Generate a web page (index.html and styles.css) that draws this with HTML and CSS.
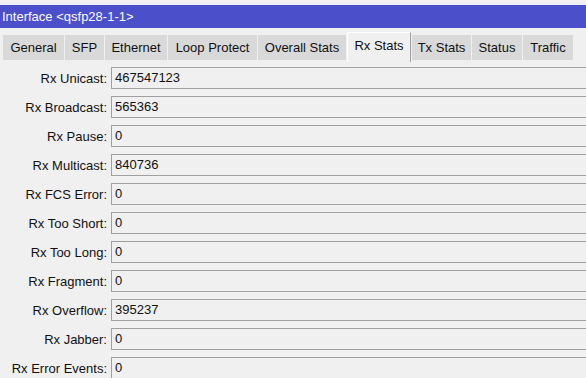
FILE: index.html
```html
<!DOCTYPE html>
<html>

<link rel="stylesheet" href="styles.css">

<head>
    <meta charset="utf-8">
    <title>Interface &lt;qsfp28-1-1&gt;</title>
</head>

<body>
    <main class="Window">
        <div class="TitleBar">Interface &lt;qsfp28-1-1&gt;</div>

        <nav class="Tabs">
            <div class="Tab">General</div>
            <div class="Tab">SFP</div>
            <div class="Tab">Ethernet</div>
            <div class="Tab">Loop Protect</div>
            <div class="Tab">Overall Stats</div>
            <div class="Tab Active">Rx Stats</div>
            <div class="Tab">Tx Stats</div>
            <div class="Tab">Status</div>
            <div class="Tab">Traffic</div>
        </nav>

        <section class="Stats">
            <div class="Row"><label>Rx Unicast:</label><div class="Field">467547123</div></div>
            <div class="Row"><label>Rx Broadcast:</label><div class="Field">565363</div></div>
            <div class="Row"><label>Rx Pause:</label><div class="Field">0</div></div>
            <div class="Row"><label>Rx Multicast:</label><div class="Field">840736</div></div>
            <div class="Row"><label>Rx FCS Error:</label><div class="Field">0</div></div>
            <div class="Row"><label>Rx Too Short:</label><div class="Field">0</div></div>
            <div class="Row"><label>Rx Too Long:</label><div class="Field">0</div></div>
            <div class="Row"><label>Rx Fragment:</label><div class="Field">0</div></div>
            <div class="Row"><label>Rx Overflow:</label><div class="Field">395237</div></div>
            <div class="Row"><label>Rx Jabber:</label><div class="Field">0</div></div>
            <div class="Row"><label>Rx Error Events:</label><div class="Field">0</div></div>
        </section>
    </main>
</body>

</html>
```

FILE: styles.css
```css
* {
    box-sizing: border-box;
    padding: 0;
    margin: 0;
}

body {
    background-color: #f0f0f0;
    font-family: 'Liberation Sans', Arial, sans-serif;
    font-size: 13px;
    color: #111111;
    overflow: hidden;
    height: 378px;
}

.Window {
    padding-top: 5px;
}

.TitleBar {
    height: 23px;
    line-height: 23px;
    padding-left: 2px;
    background-color: #4b4fc9;
    color: #ffffff;
}

.Tabs {
    display: flex;
    align-items: flex-end;
    gap: 1px;
    padding-left: 3px;
    margin-top: 2px;
    height: 30px;

    & .Tab {
        height: 25px;
        line-height: 25px;
        text-align: center;
        background-color: #d9d9d9;
        white-space: nowrap;
    }

    /* fixed widths so the strip lines up like the native dialog */
    & .Tab:nth-child(1) { width: 61px; }
    & .Tab:nth-child(2) { width: 39px; }
    & .Tab:nth-child(3) { width: 62px; }
    & .Tab:nth-child(4) { width: 89px; }
    & .Tab:nth-child(5) { width: 88px; }
    & .Tab:nth-child(6) { width: 64px; }
    & .Tab:nth-child(7) { width: 59px; }
    & .Tab:nth-child(8) { width: 50px; }
    & .Tab:nth-child(9) { width: 50px; }

    & .Tab.Active {
        height: 30px;
        line-height: 26px;
        margin-bottom: -2px;
        background-color: #f0f0f0;
        border-top: 1px solid #ffffff;
        border-left: 1px solid #ffffff;
        border-right: 1px solid #a0a0a0;
    }
}

.Stats {
    display: flex;
    flex-direction: column;
    gap: 7px;
    padding-top: 7px;
}

.Row {
    display: flex;
    align-items: center;
    height: 22px;

    & label {
        width: 108px;
        flex-shrink: 0;
        text-align: right;
        padding-right: 1px;
    }

    & .Field {
        flex: 1;
        height: 22px;
        line-height: 20px;
        margin-left: 3px;
        margin-right: -10px;
        padding-left: 3px;
        border: 1px solid #a0a0a0;
        background-color: #f0f0f0;
    }
}
```
